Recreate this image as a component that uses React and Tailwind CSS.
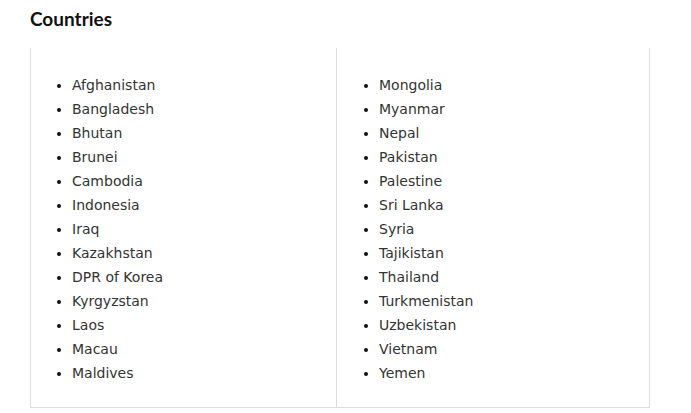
const left = [
  "Afghanistan",
  "Bangladesh",
  "Bhutan",
  "Brunei",
  "Cambodia",
  "Indonesia",
  "Iraq",
  "Kazakhstan",
  "DPR of Korea",
  "Kyrgyzstan",
  "Laos",
  "Macau",
  "Maldives",
];

const right = [
  "Mongolia",
  "Myanmar",
  "Nepal",
  "Pakistan",
  "Palestine",
  "Sri Lanka",
  "Syria",
  "Tajikistan",
  "Thailand",
  "Turkmenistan",
  "Uzbekistan",
  "Vietnam",
  "Yemen",
];

function CountryList({ items, className }) {
  return (
    <ul className={`list-disc text-[14px] leading-[24px] text-[#333] marker:text-[#111] ${className}`}>
      {items.map((c) => (
        <li key={c}>{c}</li>
      ))}
    </ul>
  );
}

export default function App() {
  return (
    <div className="min-h-[413px] bg-white px-[30px] pt-[7px]" style={{ fontFamily: '"DejaVu Sans", Verdana, sans-serif' }}>
      <h2 className="text-[19px] leading-[24px] font-bold text-[#111]" style={{ fontFamily: "Lato, sans-serif" }}>
        Countries
      </h2>
      <div className="mt-[17px] grid w-[620px] grid-cols-[307px_313px] border-b border-[#dcdcdc]">
        <div className="border-l border-r border-[#dcdcdc] pt-[25px] pb-[22px]">
          <CountryList items={left} className="pl-[41px]" />
        </div>
        <div className="border-r border-[#dcdcdc] pt-[25px] pb-[22px]">
          <CountryList items={right} className="pl-[42px]" />
        </div>
      </div>
    </div>
  );
}
